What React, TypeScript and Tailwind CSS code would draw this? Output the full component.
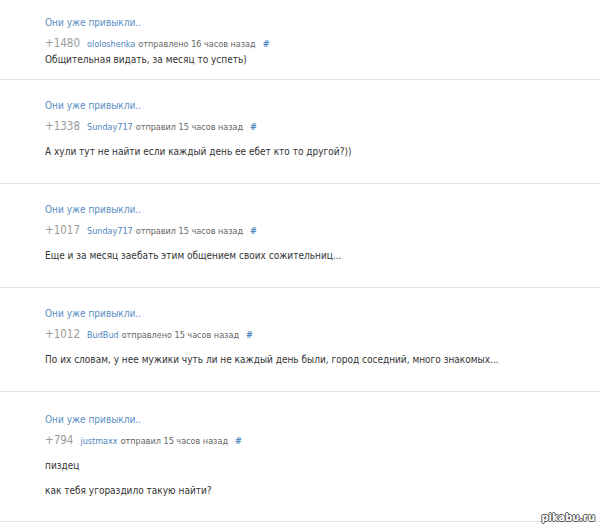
const comments = [
  {
    rating: "+1480",
    user: "ololoshenka",
    action: "отправлено 16 часов назад",
    body: ["Общительная видать, за месяц то успеть)"],
    first: true,
  },
  {
    rating: "+1338",
    user: "Sunday717",
    action: "отправил 15 часов назад",
    body: ["А хули тут не найти если каждый день ее ебет кто то другой?))"],
  },
  {
    rating: "+1017",
    user: "Sunday717",
    action: "отправил 15 часов назад",
    body: ["Еще и за месяц заебать этим общением своих сожительниц..."],
  },
  {
    rating: "+1012",
    user: "BudBud",
    action: "отправлено 15 часов назад",
    body: [
      "По их словам, у нее мужики чуть ли не каждый день были, город соседний, много знакомых...",
    ],
  },
  {
    rating: "+794",
    user: "justmaxx",
    action: "отправил 15 часов назад",
    body: ["пиздец", "как тебя угораздило такую найти?"],
    last: true,
  },
];

export default function App() {
  return (
    <div className="relative w-[600px] h-[529px] overflow-hidden bg-white font-['DejaVu_Sans_Condensed','DejaVu_Sans',sans-serif]">
      {comments.map((c) => (
        <div
          key={c.rating}
          className={
            c.first
              ? "pl-[45px] pt-[15px] pb-[11px] border-b border-[#e2e2e2]"
              : c.last
                ? "pl-[45px] pt-[20px] pb-[22px] border-b border-[#e2e2e2]"
                : "pl-[45px] pt-[18px] pb-[23px] border-b border-[#e2e2e2]"
          }
        >
          <div className="h-[16px] leading-[16px] text-[10px] text-[#5a8ec4]">
            Они уже привыкли..
          </div>
          <div className="mt-[4px] h-[16px] leading-[16px] flex items-baseline whitespace-nowrap">
            <span className="text-[11.5px] text-[#9a9a9a] mr-[7px]">{c.rating}</span>
            <span className="text-[9px] text-[#4f86bf] mr-[3px]">{c.user}</span>
            <span className="text-[9px] text-[#666]">{c.action}</span>
            <span className="text-[9px] text-[#4f86bf] ml-[7px] font-bold">#</span>
          </div>
          <div className={c.first ? "mt-[1px]" : "mt-[10px]"}>
            {c.body.map((p, i) => (
              <p
                key={i}
                className={
                  i > 0
                    ? "mt-[9px] h-[16px] leading-[16px] text-[10px] text-[#333]"
                    : "h-[16px] leading-[16px] text-[10px] text-[#333]"
                }
              >
                {p}
              </p>
            ))}
          </div>
        </div>
      ))}
      <div className="absolute right-[5px] bottom-[6px] text-[11px] font-bold leading-none text-white [text-shadow:-1px_0_0_#555,1px_0_0_#555,0_-1px_0_#555,0_1px_0_#555]">
        pikabu.ru
      </div>
    </div>
  );
}
